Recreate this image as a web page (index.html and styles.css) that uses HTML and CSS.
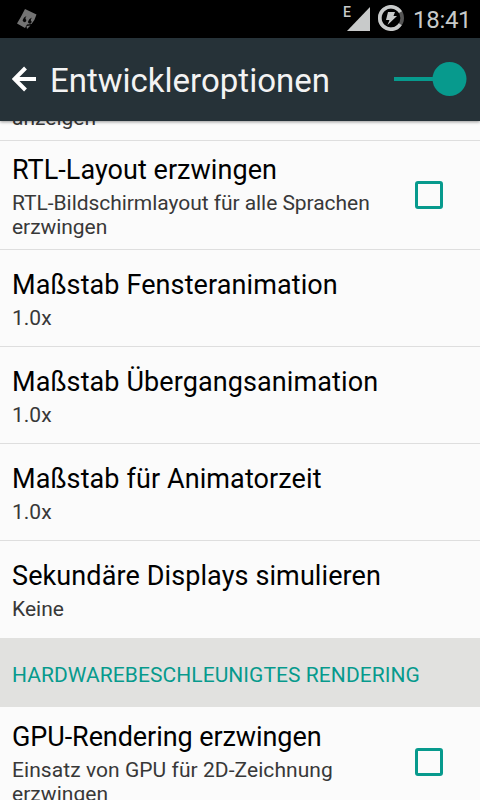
FILE: index.html
```html
<!DOCTYPE html>
<html lang="de">
<head>
<meta charset="utf-8">
<title>Entwickleroptionen</title>
<link rel="stylesheet" href="styles.css">
</head>
<body>
<div class="status">
  <svg class="notif" width="22" height="22" viewBox="0 0 22 22"><path d="M9 0L20.500 5.500Q19 11 15.500 15L11 15.500L9 19L1 14.500Q5 8 9 0Z" fill="#747474"/><path d="M10.500 7Q7.500 8 7 10.500a1.800 1.700 0 1 0 2.500-.5Q9 9 10.500 7ZM16 8.500Q13 9.500 12.300 12a1.800 1.700 0 1 0 2.500-.5Q14.500 10.500 16 8.500Z" fill="#080808"/><path d="M10.500 17l4-.5-3.500 3.500z" fill="#747474"/></svg>
  <span class="net">E</span>
  <svg class="signal" width="23" height="24" viewBox="0 0 23 24"><path d="M23 0V24H0Z" fill="#c8caca"/></svg>
  <svg class="battery" width="26" height="26" viewBox="0 0 26 26"><circle cx="13" cy="13" r="11.200" fill="none" stroke="#555" stroke-width="3.600"/><path d="M22.500 7.100A11.200 11.200 0 1 0 22.300 19.200" fill="none" stroke="#c8caca" stroke-width="3.600"/><path d="M10 7H17L15.500 11H19L9.500 20L11.500 15H8Z" fill="#c8caca"/></svg>
  <span class="time">18:41</span>
</div>
<header class="appbar">
  <svg class="back" width="24" height="26" viewBox="0 0 24 26"><path d="M24 13H3M13.500 2L2.500 13L13.500 24" fill="none" stroke="#fff" stroke-width="4"/></svg>
  <h1>Entwickleroptionen</h1>
  <svg class="switch" width="74" height="36" viewBox="0 0 74 36"><path d="M0 18H45" stroke="#079a8d" stroke-width="4"/><circle cx="55.500" cy="18" r="17" fill="#079a8d"/></svg>
</header>
<main class="list">
  <section class="row cut"><p>anzeigen</p></section>
  <section class="row check"><div class="text"><h2>RTL-Layout erzwingen</h2><p>RTL-Bildschirmlayout für alle Sprachen erzwingen</p></div><span class="box"></span></section>
  <section class="row"><h2>Maßstab Fensteranimation</h2><p>1.0x</p></section>
  <section class="row"><h2>Maßstab Übergangsanimation</h2><p>1.0x</p></section>
  <section class="row"><h2>Maßstab für Animatorzeit</h2><p>1.0x</p></section>
  <section class="row last"><h2>Sekundäre Displays simulieren</h2><p>Keine</p></section>
  <h3 class="category">HARDWAREBESCHLEUNIGTES RENDERING</h3>
  <section class="row check gpu"><div class="text"><h2>GPU-Rendering erzwingen</h2><p>Einsatz von GPU für 2D-Zeichnung erzwingen</p></div><span class="box"></span></section>
</main>
</body>
</html>
```
FILE: styles.css
```css
* { box-sizing: border-box; margin: 0; padding: 0; font-weight: 400; }
body { width: 480px; height: 800px; overflow: hidden; display: flex; flex-direction: column; background: #fbfbfb; font-family: Roboto, sans-serif; }
svg { display: block; flex: none; }
.status { height: 38px; flex: none; background: #000; color: #c8caca; display: flex; align-items: flex-start; padding-left: 16px; }
.notif { margin-top: 9px; }
.net { margin: 4px 0 0 305px; width: 4px; font-size: 14px; line-height: 17px; font-weight: 500; }
.signal { margin: 7px 0 0 0; }
.battery { margin: 5px 0 0 8px; }
.time { margin: 5px 0 0 9px; font-size: 24px; line-height: 30px; letter-spacing: -0.3px; }
.appbar { height: 83px; flex: none; background: #263238; display: flex; align-items: center; padding-left: 12px; position: relative; box-shadow: 0 1px 3px rgba(0,0,0,.4); }
.back { margin-bottom: 1px; }
h1 { margin: 2px 0 0 14px; font-size: 33px; line-height: 40px; color: #f3f3f3; white-space: nowrap; }
.switch { margin-left: auto; margin-right: 12px; margin-bottom: 2px; }
.list { flex: 1; min-height: 0; overflow: hidden; }
.row { height: 97px; padding: 19px 12px 0; border-bottom: 1px solid #dedede; }
.row.cut { height: 35px; margin-top: -15px; padding-top: 0; }
.row.check { height: 109px; padding: 13px 37px 0 12px; display: flex; justify-content: space-between; }
.row.last { border: 0; }
.text { width: 376px; }
h2 { font-size: 27px; line-height: 32px; letter-spacing: 0.1px; color: #000; white-space: nowrap; }
.row p { margin-top: 5px; font-size: 21px; line-height: 24px; color: #383838; }
.row.cut p { margin: 0; }
.check h2 { letter-spacing: 0.04px; }
.check p { letter-spacing: -0.05px; }
.row.gpu { padding-top: 14px; }
.gpu h2 { letter-spacing: -0.08px; }
.gpu p { letter-spacing: 0.06px; }
.box { flex: none; width: 28px; height: 28px; margin-top: 27px; border: 3px solid #079a8d; border-radius: 3px; }
.category { height: 69px; padding: 25px 12px 0; background: #e1e1df; color: #079a8d; font-size: 21px; line-height: 24px; letter-spacing: 0.06px; white-space: nowrap; }
```
